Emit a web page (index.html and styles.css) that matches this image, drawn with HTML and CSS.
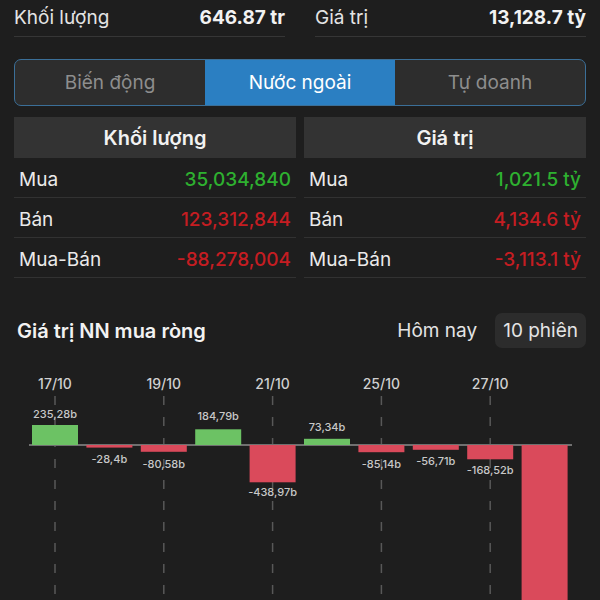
FILE: index.html
```html
<!DOCTYPE html>
<html lang="vi">

<head>
    <meta charset="UTF-8">
    <meta name="viewport" content="width=device-width, initial-scale=1.0">
    <title>Nước ngoài</title>
    <link rel="stylesheet" href="styles.css">
</head>

<body>
    <div class="page">
        <div class="stats">
            <div class="stat">
                <span>Khối lượng</span>
                <b>646.87 tr</b>
            </div>
            <div class="stat">
                <span>Giá trị</span>
                <b>13,128.7 tỷ</b>
            </div>
        </div>

        <div class="tabs">
            <div class="tab">Biến động</div>
            <div class="tab active">Nước ngoài</div>
            <div class="tab">Tự doanh</div>
        </div>

        <div class="tables">
            <div class="table">
                <div class="table-head">Khối lượng</div>
                <div class="row"><span>Mua</span><span class="up">35,034,840</span></div>
                <div class="row"><span>Bán</span><span class="down">123,312,844</span></div>
                <div class="row"><span>Mua-Bán</span><span class="down">-88,278,004</span></div>
            </div>
            <div class="table">
                <div class="table-head">Giá trị</div>
                <div class="row"><span>Mua</span><span class="up">1,021.5 tỷ</span></div>
                <div class="row"><span>Bán</span><span class="down">4,134.6 tỷ</span></div>
                <div class="row"><span>Mua-Bán</span><span class="down">-3,113.1 tỷ</span></div>
            </div>
        </div>

        <div class="section-head">
            <h3>Giá trị NN mua ròng</h3>
            <div class="periods">
                <span class="period">Hôm nay</span>
                <span class="period selected">10 phiên</span>
            </div>
        </div>
    </div>

    <svg class="chart" width="600" height="240" viewBox="0 0 600 240">
        <g class="grid">
            <line x1="55" y1="36" x2="55" y2="240" />
            <line x1="163.8" y1="36" x2="163.8" y2="240" />
            <line x1="272.6" y1="36" x2="272.6" y2="240" />
            <line x1="381.4" y1="36" x2="381.4" y2="240" />
            <line x1="490.2" y1="36" x2="490.2" y2="240" />
        </g>
        <g class="dates">
            <text x="55" y="29">17/10</text>
            <text x="163.8" y="29">19/10</text>
            <text x="272.6" y="29">21/10</text>
            <text x="381.4" y="29">25/10</text>
            <text x="490.2" y="29">27/10</text>
        </g>
        <line class="axis" x1="29" y1="85" x2="572" y2="85" />
        <g class="bars">
            <rect class="pos" x="32" y="65" width="46" height="20" />
            <rect class="neg" x="86.4" y="85" width="46" height="2.6" />
            <rect class="neg" x="140.8" y="85" width="46" height="6.8" />
            <rect class="pos" x="195.2" y="69.3" width="46" height="15.7" />
            <rect class="neg" x="249.6" y="85" width="46" height="37.3" />
            <rect class="pos" x="304" y="78.8" width="46" height="6.2" />
            <rect class="neg" x="358.4" y="85" width="46" height="7.2" />
            <rect class="neg" x="412.8" y="85" width="46" height="4.8" />
            <rect class="neg" x="467.2" y="85" width="46" height="14.3" />
            <rect class="neg" x="521.6" y="85" width="46" height="300" />
        </g>
        <g class="labels">
            <text x="55" y="58">235,28b</text>
            <text x="109.4" y="103">-28,4b</text>
            <text x="163.8" y="108">-80,58b</text>
            <text x="218.2" y="60">184,79b</text>
            <text x="272.6" y="136">-438,97b</text>
            <text x="327" y="71">73,34b</text>
            <text x="381.4" y="108">-85,14b</text>
            <text x="435.8" y="105">-56,71b</text>
            <text x="490.2" y="114">-168,52b</text>
        </g>
    </svg>
</body>
</html>
```

FILE: styles.css
```css
body {
    margin: 0;
    background: #1e1e1e;
    color: #f2f2f2;
    font-family: 'Inter', 'Roboto', sans-serif;
    overflow: hidden;
}

.page {
    padding: 0 14px;
}

.stats {
    display: grid;
    grid-template-columns: 1fr 1fr;
    gap: 30px;
}

.stat {
    display: flex;
    justify-content: space-between;
    align-items: center;
    height: 37px;
    padding-bottom: 1px;
    border-bottom: 1px solid #363636;
    font-size: 19px;
    box-sizing: border-box;
}

.stat span {
    color: #e4e4e4;
}

.stat b {
    font-weight: 700;
}

.tabs {
    display: grid;
    grid-template-columns: 1fr 1fr 1fr;
    margin-top: 22px;
    height: 47px;
    border: 1.5px solid #3b6f98;
    border-radius: 7px;
    overflow: hidden;
    box-sizing: border-box;
    background: #2d2d2d;
}

.tab {
    display: flex;
    justify-content: center;
    align-items: center;
    font-size: 19px;
    color: #8e8e8e;
}

.tab.active {
    background: #2b7fc2;
    color: #fff;
}

.tables {
    display: grid;
    grid-template-columns: 1fr 1fr;
    gap: 8px;
    margin-top: 11px;
}

.table-head {
    height: 41px;
    background: #333;
    display: flex;
    justify-content: center;
    align-items: center;
    font-size: 20px;
    font-weight: 600;
}

.row {
    display: flex;
    justify-content: space-between;
    align-items: center;
    height: 40px;
    padding: 3px 5px 0;
    border-bottom: 1px solid #323232;
    font-size: 19px;
    color: #eaeaea;
    box-sizing: border-box;
}

.row:first-of-type {
    height: 41px;
}

.up {
    color: #2eb030;
    font-weight: 500;
}

.down {
    color: #c51d22;
    font-weight: 500;
}

.section-head {
    display: flex;
    justify-content: space-between;
    align-items: center;
    margin-top: 35px;
}

.section-head h3 {
    margin: 0 0 0 3px;
    font-size: 20px;
    font-weight: 600;
}

.periods {
    display: flex;
    align-items: center;
    gap: 10px;
}

.period {
    font-size: 19px;
    color: #e4e4e4;
    padding: 0 8px;
    height: 35px;
    line-height: 35px;
    border-radius: 7px;
}

.period.selected {
    background: #2c2c2c;
}

.chart {
    display: block;
    margin-top: 12px;
}

.grid line {
    stroke: #585858;
    stroke-width: 1.5;
    stroke-dasharray: 9 12;
}

.dates text {
    fill: #d0d0d0;
    font-size: 14px;
    font-weight: 500;
    text-anchor: middle;
}

.axis {
    stroke: #707070;
    stroke-width: 2;
}

.pos {
    fill: #6cc264;
}

.neg {
    fill: #da4a5b;
}

.labels text {
    fill: #c8c8c8;
    font-size: 11px;
    font-weight: 500;
    text-anchor: middle;
}
```
